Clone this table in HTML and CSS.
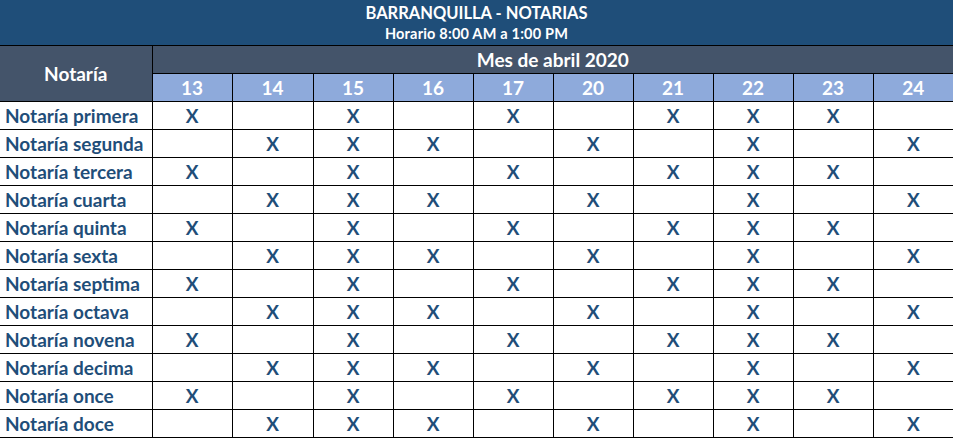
FILE: index.html
```html
<!DOCTYPE html>
<html lang="es">
<head>
<meta charset="utf-8">
<title>Barranquilla - Notarias</title>
<link rel="stylesheet" href="styles.css">
</head>
<body>
<table class="sheet">
  <colgroup>
    <col class="c-name">
    <col class="c-day"><col class="c-day-w"><col class="c-day"><col class="c-day"><col class="c-day">
    <col class="c-day"><col class="c-day"><col class="c-day"><col class="c-day"><col class="c-day">
  </colgroup>
  <thead>
    <tr class="title-row">
      <th colspan="11" class="title">
        <div class="t1">BARRANQUILLA - NOTARIAS</div>
        <div class="t2">Horario 8:00 AM a 1:00 PM</div>
      </th>
    </tr>
    <tr class="month-row">
      <th rowspan="2" class="notaria-h">Notaría</th>
      <th colspan="10" class="month">Mes de abril 2020</th>
    </tr>
    <tr class="days-row">
      <th class="day">13</th><th class="day">14</th><th class="day">15</th><th class="day">16</th><th class="day">17</th>
      <th class="day">20</th><th class="day">21</th><th class="day">22</th><th class="day">23</th><th class="day">24</th>
    </tr>
  </thead>
  <tbody>
    <tr><td class="name">Notaría primera</td><td>X</td><td></td><td>X</td><td></td><td>X</td><td></td><td>X</td><td>X</td><td>X</td><td></td></tr>
    <tr><td class="name">Notaría segunda</td><td></td><td>X</td><td>X</td><td>X</td><td></td><td>X</td><td></td><td>X</td><td></td><td>X</td></tr>
    <tr><td class="name">Notaría tercera</td><td>X</td><td></td><td>X</td><td></td><td>X</td><td></td><td>X</td><td>X</td><td>X</td><td></td></tr>
    <tr><td class="name">Notaría cuarta</td><td></td><td>X</td><td>X</td><td>X</td><td></td><td>X</td><td></td><td>X</td><td></td><td>X</td></tr>
    <tr><td class="name">Notaría quinta</td><td>X</td><td></td><td>X</td><td></td><td>X</td><td></td><td>X</td><td>X</td><td>X</td><td></td></tr>
    <tr><td class="name">Notaría sexta</td><td></td><td>X</td><td>X</td><td>X</td><td></td><td>X</td><td></td><td>X</td><td></td><td>X</td></tr>
    <tr><td class="name">Notaría septima</td><td>X</td><td></td><td>X</td><td></td><td>X</td><td></td><td>X</td><td>X</td><td>X</td><td></td></tr>
    <tr><td class="name">Notaría octava</td><td></td><td>X</td><td>X</td><td>X</td><td></td><td>X</td><td></td><td>X</td><td></td><td>X</td></tr>
    <tr><td class="name">Notaría novena</td><td>X</td><td></td><td>X</td><td></td><td>X</td><td></td><td>X</td><td>X</td><td>X</td><td></td></tr>
    <tr><td class="name">Notaría decima</td><td></td><td>X</td><td>X</td><td>X</td><td></td><td>X</td><td></td><td>X</td><td></td><td>X</td></tr>
    <tr><td class="name">Notaría once</td><td>X</td><td></td><td>X</td><td></td><td>X</td><td></td><td>X</td><td>X</td><td>X</td><td></td></tr>
    <tr><td class="name">Notaría doce</td><td></td><td>X</td><td>X</td><td>X</td><td></td><td>X</td><td></td><td>X</td><td></td><td>X</td></tr>
  </tbody>
</table>
</body>
</html>
```
FILE: styles.css
```css
html, body {
  margin: 0;
  padding: 0;
  background: #ffffff;
}

.sheet {
  width: 953px;
  table-layout: fixed;
  border-collapse: collapse;
  font-family: Lato, "Liberation Sans", sans-serif;
  font-weight: 700;
  color: #1f4e79;
}

.c-name { width: 152px; }
.c-day { width: 80px; }
.c-day-w { width: 81px; }

.sheet th,
.sheet td {
  border: 1px solid #000000;
  padding: 1px 0 0 0;
  text-align: center;
  vertical-align: middle;
  font-size: 19px;
  height: 26px;
  line-height: 22px;
}

.title-row .title {
  background: #1f4e79;
  color: #ffffff;
  height: 45px;
  padding: 0;
  border-top: none;
  border-left: none;
  border-right: none;
}

.t1 {
  font-size: 16.5px;
  line-height: 22px;
  padding-top: 1px;
}

.t2 {
  font-size: 14.5px;
  line-height: 20px;
  letter-spacing: 0.2px;
}

.notaria-h {
  background: #44546a;
  color: #ffffff;
}

.month {
  background: #44546a;
  color: #ffffff;
  border-right: none;
}

.day {
  background: #8eaadb;
  color: #ffffff;
}

.sheet tr > *:last-child {
  border-right: none;
}

.sheet tr > *:first-child {
  border-left: none;
}

.sheet .name {
  text-align: left;
  padding-left: 5px;
  white-space: nowrap;
}
```
